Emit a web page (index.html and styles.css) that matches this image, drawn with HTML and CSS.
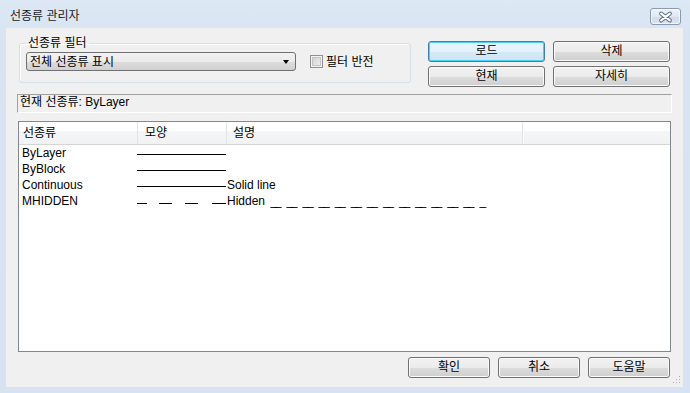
FILE: index.html
```html
<!DOCTYPE html>
<html>
<head>
<meta charset="utf-8">
<title>선종류 관리자</title>
<link rel="stylesheet" href="styles.css">
</head>
<body>

<div class="window">
	<div class="titlebar">
		<span class="title">선종류 관리자</span>
		<span class="close">
			<svg width="30" height="16" viewBox="0 0 30 16">
				<path d="M10.5 4.5 L19.5 11.5 M19.5 4.5 L10.5 11.5" stroke="#5d6f88" stroke-width="4.2" stroke-linecap="round" fill="none"/>
				<path d="M10.5 4.5 L19.5 11.5 M19.5 4.5 L10.5 11.5" stroke="#ffffff" stroke-width="2.2" stroke-linecap="round" fill="none"/>
			</svg>
		</span>
	</div>

	<div class="client">
		<div class="top">
			<fieldset class="filter">
				<legend>선종류 필터</legend>
				<div class="filter-row">
					<div class="combo"><span>전체 선종류 표시</span><span class="arrow"></span></div>
					<label class="check"><span class="box"></span>필터 반전</label>
				</div>
			</fieldset>
			<div class="actions">
				<button class="btn focus">로드</button>
				<button class="btn">삭제</button>
				<button class="btn">현재</button>
				<button class="btn">자세히</button>
			</div>
		</div>

		<div class="current">현재 선종류: ByLayer</div>

		<div class="list">
			<div class="row head">
				<div class="c1">선종류</div>
				<div class="c2">모양</div>
				<div class="c3">설명</div>
				<div class="c4"></div>
			</div>
			<div class="row">
				<div class="c1">ByLayer</div>
				<div class="c2"><span class="solid"></span></div>
				<div class="c3"></div>
			</div>
			<div class="row">
				<div class="c1">ByBlock</div>
				<div class="c2"><span class="solid"></span></div>
				<div class="c3"></div>
			</div>
			<div class="row">
				<div class="c1">Continuous</div>
				<div class="c2"><span class="solid"></span></div>
				<div class="c3">Solid line</div>
			</div>
			<div class="row">
				<div class="c1">MHIDDEN</div>
				<div class="c2">
					<svg class="dash" width="89" height="3" viewBox="0 0 89 3">
						<path d="M0 1.5 H10 M22 1.5 H35 M48 1.5 H61 M75 1.5 H89" stroke="#000" stroke-width="1" fill="none"/>
					</svg>
				</div>
				<div class="c3">Hidden <span class="dashes">__ __ __ __ __ __ __ __ __ __ __ __ __ _</span></div>
			</div>
		</div>

		<div class="footer">
			<button class="btn wide">확인</button>
			<button class="btn wide">취소</button>
			<button class="btn wide">도움말</button>
		</div>

		<svg class="grip" width="8" height="8" viewBox="0 0 8 8">
			<rect x="6" y="0" width="1" height="1" fill="#b0b0b0"/>
			<rect x="3" y="3" width="1" height="1" fill="#b0b0b0"/>
			<rect x="6" y="3" width="1" height="1" fill="#b0b0b0"/>
			<rect x="0" y="6" width="1" height="1" fill="#b0b0b0"/>
			<rect x="3" y="6" width="1" height="1" fill="#b0b0b0"/>
			<rect x="6" y="6" width="1" height="1" fill="#b0b0b0"/>
		</svg>
	</div>
</div>

</body>
</html>
```

FILE: styles.css
```css
body {
	margin: 0;
	font-family: "Liberation Sans", "Noto Sans CJK KR", sans-serif;
	font-size: 12px;
	color: #000;
	background: #dae5f3;
}

.window {
	width: 690px;
	height: 393px;
	box-sizing: border-box;
	padding: 0 7px 6px 6px;
	background: linear-gradient(#dde8f5, #d8e4f2 40px, #d7e3f2);
}

.titlebar {
	height: 28px;
	display: flex;
	justify-content: space-between;
	margin-left: -6px;
	margin-right: -7px;
}

.title {
	padding: 9px 0 0 10px;
	line-height: 14px;
	color: #1a1a1a;
}

.close {
	margin: 8px 9px 0 0;
	width: 31px;
	height: 17px;
	box-sizing: border-box;
	border: 1px solid #8b9ab0;
	border-radius: 3px;
	background: linear-gradient(#eef3fa, #dfe7f2 50%, #d3dceb 51%, #dbe3ef);
	box-shadow: inset 0 0 0 1px rgba(255,255,255,0.6);
	display: flex;
}

.client {
	position: relative;
	height: 359px;
	box-sizing: border-box;
	background: #f0f0f0;
	padding-bottom: 9px;
}

/* filter + buttons */

.top {
	display: flex;
	align-items: flex-start;
	height: 47px;
	padding-top: 8px;
}

.filter {
	width: 392px;
	height: 47px;
	box-sizing: border-box;
	margin: 0 0 0 13px;
	padding: 0 0 0 6px;
	border: 1px solid #d5dfe5;
	border-radius: 3px;
	box-shadow: inset 1px 1px 0 #fff;
	overflow: hidden;
}

.filter legend {
	padding: 0 2px;
	line-height: 14px;
	height: 14px;
}

.filter-row {
	display: flex;
	align-items: center;
	height: 19px;
	margin-top: 2px;
}

.combo {
	width: 270px;
	height: 19px;
	box-sizing: border-box;
	border: 1px solid #707070;
	border-radius: 3px;
	background: linear-gradient(#f2f2f2, #ebebeb 50%, #dddddd 51%, #d0d0d0);
	display: flex;
	align-items: center;
	justify-content: space-between;
	padding: 0 6px 0 3px;
	line-height: 16px;
}

.arrow {
	width: 0;
	height: 0;
	border-left: 3.5px solid transparent;
	border-right: 3.5px solid transparent;
	border-top: 4px solid #000;
	margin-top: 1px;
}

.check {
	display: flex;
	align-items: center;
	margin-left: 14px;
	line-height: 14px;
}

.check .box {
	width: 13px;
	height: 13px;
	box-sizing: border-box;
	border: 1px solid #8e8f8f;
	background: linear-gradient(135deg, #cbcbcb, #f5f5f5);
	box-shadow: inset 0 0 0 1px #f4f4f4, inset 0 0 0 2px #c4c4c4;
	margin-right: 3px;
}

.actions {
	display: grid;
	grid-template-columns: 117px 117px;
	grid-template-rows: 21px 21px;
	column-gap: 8px;
	row-gap: 4px;
	margin: 5px 0 0 17px;
}

.btn {
	font-family: inherit;
	font-size: 12px;
	color: #000;
	padding: 0;
	border: 1px solid #707070;
	border-radius: 3px;
	background: linear-gradient(#f2f2f2, #ebebeb 50%, #dddddd 51%, #cfcfcf);
	box-shadow: inset 0 0 0 1px #fbfbfb;
	line-height: 17px;
}

.btn.focus {
	border-color: #3c7fb1;
	box-shadow: inset 0 0 0 1px #48d0f6;
	background: linear-gradient(#eaf6fd, #e3f1fb 50%, #d5e9f7 51%, #cfe3f3);
}

/* current linetype */

.current {
	margin: 11px 0 0 11px;
	width: 655px;
	height: 19px;
	box-sizing: border-box;
	border-top: 1px solid #a0a0a0;
	border-left: 1px solid #a0a0a0;
	border-right: 1px solid #fff;
	border-bottom: 1px solid #fff;
	padding-left: 2px;
	line-height: 15px;
}

/* list */

.list {
	margin: 8px 0 0 12px;
	width: 653px;
	height: 231px;
	box-sizing: border-box;
	border: 1px solid #828790;
	background: #fff;
}

.row {
	display: flex;
	height: 16px;
	line-height: 16px;
}

.row > div {
	flex: none;
	white-space: nowrap;
}

.c1 { width: 118px; padding-left: 3px; box-sizing: border-box; }
.c2 { width: 89px; }
.c3 { width: 296px; padding-left: 1px; box-sizing: border-box; }

.row.head {
	height: 23px;
	line-height: 22px;
	border-bottom: 1px solid #d5d5d5;
	background: linear-gradient(#ffffff, #ffffff 42%, #f4f5f7 43%, #f1f2f4);
	box-sizing: border-box;
}

.row.head > div {
	box-sizing: border-box;
	border-right: 1px solid #e3e4e6;
}

.row.head .c1 { width: 119px; padding-left: 4px; }
.row.head .c2 { width: 89px; padding-left: 7px; }
.row.head .c3 { width: 296px; padding-left: 6px; }
.row.head .c4 { flex: 1; border-right: none; border-left: 1px solid #fff; }

.solid {
	display: block;
	width: 89px;
	height: 1px;
	background: #000;
	margin-top: 9px;
}

.dash {
	display: block;
	margin-top: 9px;
}

.dashes {
	margin-left: 2px;
	letter-spacing: -2.3px;
	word-spacing: 6.3px;
}

/* bottom buttons */

.footer {
	display: flex;
	justify-content: flex-end;
	gap: 8px;
	margin: 5px 13px 0 0;
}

.btn.wide {
	width: 82px;
	height: 21px;
}

.grip {
	position: absolute;
	right: 2px;
	bottom: 3px;
}
```
